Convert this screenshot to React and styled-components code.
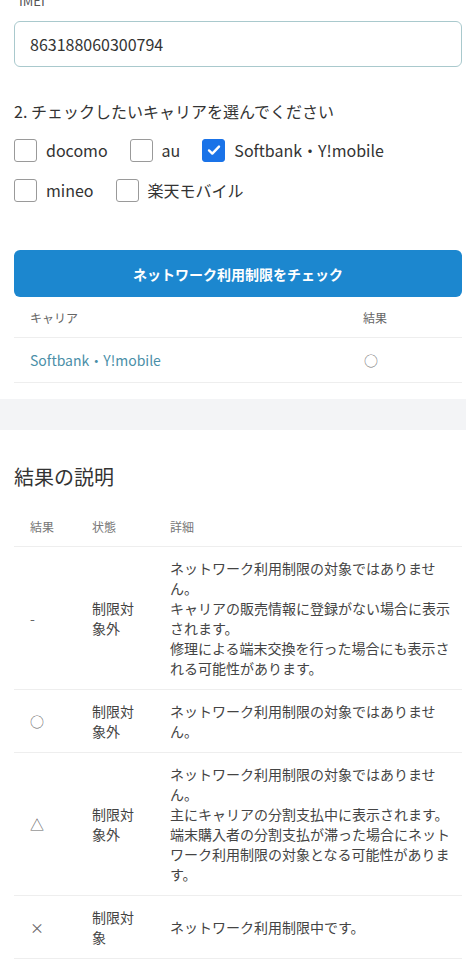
import React from 'react';
import styled, { createGlobalStyle } from 'styled-components';

const GlobalStyle = createGlobalStyle`
	* {
		box-sizing: border-box;
	}
	body {
		margin: 0;
		background: #fff;
		font-family: "Noto Sans CJK JP", "Noto Sans", sans-serif;
		color: #333;
	}
`;

const Section = styled.section`
	padding: 0 4px 0 14px;
`;

const Label = styled.div`
	margin: -9px 0 0 5px;
	font-size: 13px;
	line-height: 20px;
	color: #555;
`;

const Input = styled.input`
	display: block;
	width: 448px;
	height: 46px;
	margin-top: 10px;
	padding: 0 15px;
	border: 1.5px solid #a9c9cd;
	border-radius: 6px;
	font-family: inherit;
	font-size: 16px;
	color: #333;
	outline: none;
`;

const Question = styled.p`
	margin: 32px 0 0;
	font-size: 16px;
	line-height: 24px;
	color: #333;
`;

const Choices = styled.div`
	display: flex;
	flex-wrap: wrap;
	column-gap: 22px;
	row-gap: 16px;
	margin-top: 15px;
	width: 420px;
`;

const Choice = styled.label`
	display: flex;
	align-items: center;
	gap: 9px;
	font-size: 16px;
	line-height: 24px;
	color: #333;
`;

const Box = styled.span`
	display: flex;
	align-items: center;
	justify-content: center;
	width: 23px;
	height: 23px;
	border-radius: 3px;
	border: 1px solid ${(p) => (p.checked ? '#1a73e8' : '#9a9a9a')};
	background: ${(p) => (p.checked ? '#1a73e8' : '#fff')};
`;

const Button = styled.button`
	display: block;
	width: 448px;
	height: 47px;
	margin-top: 48px;
	border: none;
	border-radius: 6px;
	background: #1c87cf;
	color: #fff;
	font-family: inherit;
	font-size: 14px;
	font-weight: 700;
`;

const ResultTable = styled.div`
	width: 448px;
	display: grid;
	grid-template-columns: 333px 1fr;
`;

const HeadCell = styled.div`
	height: 41px;
	display: flex;
	align-items: center;
	padding-left: 16px;
	font-size: 12px;
	color: #666;
	border-bottom: 1px solid #eee;
`;

const BodyCell = styled.div`
	height: 45px;
	display: flex;
	align-items: center;
	padding-left: ${(p) => (p.mark ? '17px' : '16px')};
	font-size: 14px;
	color: ${(p) => (p.link ? '#4a8fa8' : '#777')};
	border-bottom: 1px solid #eee;
`;

const Band = styled.div`
	height: 31px;
	margin-top: 16px;
	background: #f3f4f6;
`;

const Heading = styled.h2`
	margin: 33px 0 0;
	font-size: 20px;
	font-weight: 400;
	line-height: 28px;
	color: #333;
`;

const Legend = styled.div`
	width: 448px;
	margin-top: 15px;
	display: grid;
	grid-template-columns: 62px 78px 1fr;
`;

const LegendHead = styled.div`
	height: 41px;
	display: flex;
	align-items: center;
	padding-left: 16px;
	font-size: 12px;
	color: #777;
	border-bottom: 1px solid #eee;
`;

const LegendCell = styled.div`
	display: flex;
	align-items: center;
	padding: 11px 8px 11px 16px;
	font-size: 14px;
	line-height: 20px;
	color: ${(p) => (p.mark ? '#666' : '#444')};
	border-bottom: 1px solid #eee;
`;

const Check = () => (
	<svg width='16' height='16' viewBox='0 0 16 16'>
		<path
			d='M3 8.4l3.3 3.2L13 4.6'
			fill='none'
			stroke='#fff'
			strokeWidth='2.4'
			strokeLinecap='round'
			strokeLinejoin='round'
		/>
	</svg>
);

const carriers = [
	{ name: 'docomo', checked: false },
	{ name: 'au', checked: false },
	{ name: 'Softbank・Y!mobile', checked: true },
	{ name: 'mineo', checked: false },
	{ name: '楽天モバイル', checked: false },
];

const legend = [
	{
		mark: '-',
		state: '制限対象外',
		text: [
			'ネットワーク利用制限の対象ではありません。',
			'キャリアの販売情報に登録がない場合に表示されます。',
			'修理による端末交換を行った場合にも表示される可能性があります。',
		],
	},
	{
		mark: '○',
		state: '制限対象外',
		text: ['ネットワーク利用制限の対象ではありません。'],
	},
	{
		mark: '△',
		state: '制限対象外',
		text: [
			'ネットワーク利用制限の対象ではありません。',
			'主にキャリアの分割支払中に表示されます。',
			'端末購入者の分割支払が滞った場合にネットワーク利用制限の対象となる可能性があります。',
		],
	},
	{
		mark: '×',
		state: '制限対象',
		text: ['ネットワーク利用制限中です。'],
	},
];

const App = () => {
	return (
		<>
			<GlobalStyle />
			<Section>
				<Label>IMEI</Label>
				<Input defaultValue='863188060300794' />
				<Question>2. チェックしたいキャリアを選んでください</Question>
				<Choices>
					{carriers.map((c) => (
						<Choice key={c.name}>
							<Box checked={c.checked}>{c.checked && <Check />}</Box>
							<span>{c.name}</span>
						</Choice>
					))}
				</Choices>
				<Button>ネットワーク利用制限をチェック</Button>
				<ResultTable>
					<HeadCell>キャリア</HeadCell>
					<HeadCell>結果</HeadCell>
					<BodyCell link>Softbank・Y!mobile</BodyCell>
					<BodyCell mark>○</BodyCell>
				</ResultTable>
			</Section>
			<Band />
			<Section>
				<Heading>結果の説明</Heading>
				<Legend>
					<LegendHead>結果</LegendHead>
					<LegendHead>状態</LegendHead>
					<LegendHead>詳細</LegendHead>
					{legend.map((row) => (
						<React.Fragment key={row.mark}>
							<LegendCell mark>{row.mark}</LegendCell>
							<LegendCell>{row.state}</LegendCell>
							<LegendCell>
								<div>
									{row.text.map((t) => (
										<div key={t}>{t}</div>
									))}
								</div>
							</LegendCell>
						</React.Fragment>
					))}
				</Legend>
			</Section>
		</>
	);
};

export default App;
